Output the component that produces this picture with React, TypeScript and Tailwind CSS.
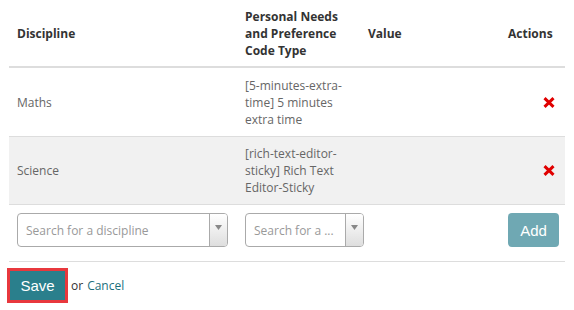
import React from "react";

const font = { fontFamily: '"Open Sans", "Liberation Sans", sans-serif' };

function XIcon() {
  return (
    <svg width="12" height="11" viewBox="0 0 12 11" className="block">
      <path d="M1.5 1.2 L10.5 9.8 M10.5 1.2 L1.5 9.8" stroke="#e00000" strokeWidth="3" strokeLinecap="butt" />
    </svg>
  );
}

function Select({ placeholder, width }: { placeholder: string; width: string }) {
  return (
    <div className={`flex h-[34px] ${width} rounded-[4px] border border-[#aaa] bg-white overflow-hidden`}>
      <div className="flex-1 flex items-center pl-[8px] text-[12px] text-[#999] whitespace-nowrap overflow-hidden">
        {placeholder}
      </div>
      <div className="w-[18px] border-l border-[#aaa] bg-gradient-to-b from-white to-[#dedede] flex justify-center pt-[11px]">
        <svg width="7" height="5" viewBox="0 0 7 5">
          <path d="M0 0 L7 0 L3.5 5 Z" fill="#888" />
        </svg>
      </div>
    </div>
  );
}

const cols = "grid grid-cols-[228px_123px_140px_65px]";

export default function App() {
  return (
    <div className="w-[574px] h-[310px] bg-white text-[12px] leading-[17px]" style={font}>
      <div className="ml-[9px] w-[556px]">
        <div className={`${cols} h-[68px] border-b-2 border-[#ddd] text-[#333] font-bold items-center`}>
          <div className="pl-[8px]">Discipline</div>
          <div className="pl-[8px]">
            <div className="w-[107px]">Personal Needs and Preference Code Type</div>
          </div>
          <div className="pl-[8px]">Value</div>
          <div className="pl-[8px]">Actions</div>
        </div>
        <div className={`${cols} h-[69px] border-b border-[#ddd] text-[#666] items-center`}>
          <div className="pl-[8px]">Maths</div>
          <div className="pl-[8px]">
            <div className="w-[107px]">[5-minutes-extra-time] 5 minutes extra time</div>
          </div>
          <div></div>
          <div className="flex justify-end pr-[10px]">
            <XIcon />
          </div>
        </div>
        <div className={`${cols} h-[68px] border-b border-[#ddd] bg-[#f1f1f1] text-[#666] items-center`}>
          <div className="pl-[8px]">Science</div>
          <div className="pl-[8px]">
            <div className="w-[107px]">[rich-text-editor-sticky] Rich Text Editor-Sticky</div>
          </div>
          <div></div>
          <div className="flex justify-end pr-[10px]">
            <XIcon />
          </div>
        </div>
        <div className={`${cols} h-[57px] border-b border-[#ddd] pt-[8px] items-start`}>
          <div className="pl-[8px]">
            <Select placeholder="Search for a discipline" width="w-[211px]" />
          </div>
          <div className="pl-[8px]">
            <Select placeholder="Search for a ..." width="w-[119px]" />
          </div>
          <div></div>
          <div className="pl-[8px]">
            <button
              className="w-[51px] h-[34px] rounded-[4px] bg-[#6fa8b3] text-white text-[15px]"
              style={{ fontFamily: '"Liberation Sans", Arial, sans-serif' }}
            >
              Add
            </button>
          </div>
        </div>
      </div>
      <div className="flex items-center pl-[7px] mt-[6px]">
        <div className="border-[3px] border-[#e8383d] w-[61px] h-[35px] flex">
          <button
            className="flex-1 bg-[#2a7f8c] text-white text-[15px] leading-none"
            style={{ fontFamily: '"Liberation Sans", Arial, sans-serif' }}
          >
            Save
          </button>
        </div>
        <span className="ml-[3px] text-[#333] text-[12px]">or</span>
        <span className="ml-[4px] text-[#1b6f7d] text-[12px]">Cancel</span>
      </div>
    </div>
  );
}
